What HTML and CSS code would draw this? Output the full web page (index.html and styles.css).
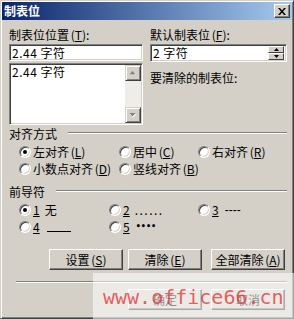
FILE: index.html
```html
<!DOCTYPE html>
<html lang="zh-CN">
<head>
<meta charset="utf-8">
<title>制表位</title>
<link rel="stylesheet" href="styles.css">
</head>
<body>
<div class="dialog">
  <div class="titlebar">
    <span class="title">制表位</span>
    <span class="close"><svg width="8" height="7" viewBox="0 0 8 7"><path d="M0 0h2l2 2.4L6 0h2L5 3.5 8 7H6L4 4.6 2 7H0l3-3.5z" fill="#000"/></svg></span>
  </div>
  <div class="body">
    <div class="top">
      <div class="col-left">
        <div class="label">制表位位置 (<u>T</u>):</div>
        <div class="edit">2.44 字符</div>
        <div class="list">
          <div class="list-items"><div class="item">2.44 字符</div></div>
          <div class="vscroll">
            <span class="sbtn"><svg width="8" height="5" viewBox="0 0 8 5"><path d="M4 1 7 4H1z" fill="#fff"/><path d="M3.5 0 6.5 3.5H.5z" fill="#808080"/></svg></span>
            <span class="track"></span>
            <span class="sbtn"><svg width="8" height="5" viewBox="0 0 8 5"><path d="M1 1h6L4 4.5z" fill="#fff"/><path d="M.5 0h6L3.5 3.5z" fill="#808080"/></svg></span>
          </div>
        </div>
      </div>
      <div class="col-right">
        <div class="label">默认制表位 (<u>F</u>):</div>
        <div class="spin">
          <span class="spin-text">2 字符</span>
          <span class="spin-btns">
            <span class="spbtn"><svg width="5" height="3" viewBox="0 0 5 3"><path d="M2.5 0 5 3H0z" fill="#000"/></svg></span>
            <span class="spbtn"><svg width="5" height="3" viewBox="0 0 5 3"><path d="M0 0h5L2.5 3z" fill="#000"/></svg></span>
          </span>
        </div>
        <div class="label clear-label">要清除的制表位:</div>
      </div>
    </div>

    <div class="section"><span>对齐方式</span><span class="rule"></span></div>
    <div class="radios align">
      <label class="opt"><span class="radio checked"></span>左对齐 (<u>L</u>)</label>
      <label class="opt"><span class="radio"></span>居中 (<u>C</u>)</label>
      <label class="opt"><span class="radio"></span>右对齐 (<u>R</u>)</label>
      <label class="opt"><span class="radio"></span>小数点对齐 (<u>D</u>)</label>
      <label class="opt"><span class="radio"></span>竖线对齐 (<u>B</u>)</label>
    </div>

    <div class="section sec2"><span>前导符</span><span class="rule"></span></div>
    <div class="radios leader">
      <label class="opt"><span class="radio checked"></span><u>1</u><span class="none">无</span></label>
      <label class="opt"><span class="radio"></span><u>2</u><span class="dots">......</span></label>
      <label class="opt"><span class="radio"></span><u>3</u><span class="dash">----</span></label>
      <label class="opt"><span class="radio"></span><u>4</u><span class="under"></span></label>
      <label class="opt"><span class="radio"></span><u>5</u><span class="bdots">••••</span></label>
    </div>

    <div class="btnrow">
      <span class="btn b1">设置 (<u>S</u>)</span>
      <span class="btn b2">清除 (<u>E</u>)</span>
      <span class="btn b3">全部清除 (<u>A</u>)</span>
    </div>
    <div class="sep"></div>
    <div class="okrow">
      <span class="btn">确定</span>
      <span class="btn b3">取消</span>
    </div>
  </div>
  <div class="watermark"><span>www.office66.cn</span></div>
</div>
</body>
</html>
```

FILE: styles.css
```css
* { box-sizing: border-box; }
html, body { margin: 0; padding: 0; }
body {
  width: 294px;
  height: 319px;
  overflow: hidden;
  background: #d4d0c8;
  font-family: "Noto Sans CJK SC", "Noto Sans", sans-serif;
  font-size: 12px;
  color: #000;
}
u { text-decoration: underline; text-underline-offset: 1px; }

.dialog {
  position: relative;
  width: 294px;
  height: 319px;
  background: #d4d0c8;
  border: 1px solid;
  border-color: #d4d0c8 #404040 #404040 #d4d0c8;
  box-shadow: inset 1px 1px #fff, inset -1px -1px #808080;
  padding: 1px;
  display: flex;
  flex-direction: column;
}

.titlebar {
  height: 18px;
  flex: none;
  display: flex;
  align-items: center;
  padding-left: 2px;
  background: linear-gradient(to right, #0a246a, #a6caf0);
}
.title { color: #fff; font-weight: bold; font-size: 12px; line-height: 14px; }
.close {
  margin-left: auto;
  margin-right: 2px;
  width: 16px;
  height: 14px;
  background: #d4d0c8;
  border: 1px solid;
  border-color: #fff #404040 #404040 #fff;
  box-shadow: inset -1px -1px #808080;
  display: flex;
  align-items: center;
  justify-content: center;
  padding-right: 1px;
}

.body { padding: 8px 5px 0 7px; display: flex; flex-direction: column; }

.top { display: flex; }
.col-left { width: 134px; display: flex; flex-direction: column; }
.col-right { width: 137px; margin-left: 7px; display: flex; flex-direction: column; }
.label { height: 14px; line-height: 14px; white-space: nowrap; word-spacing: -1px; }
.clear-label { margin-top: 9px; }

.edit, .list, .spin {
  background: #fff;
  border: 1px solid;
  border-color: #808080 #fff #fff #808080;
  box-shadow: inset 1px 1px #404040, inset -1px -1px #d4d0c8;
}
.edit {
  margin-top: 2px;
  height: 17px;
  line-height: 15px;
  padding-left: 2px;
  white-space: nowrap;
  letter-spacing: 0.5px;
}
.list {
  margin-top: 2px;
  height: 62px;
  display: flex;
  padding: 1px;
}
.list-items { flex: 1; padding-left: 1px; }
.item { line-height: 13px; white-space: nowrap; letter-spacing: 0.5px; }
.vscroll { width: 16px; display: flex; flex-direction: column; }
.sbtn {
  width: 16px;
  height: 16px;
  background: #d4d0c8;
  border: 1px solid;
  border-color: #d4d0c8 #404040 #404040 #d4d0c8;
  box-shadow: inset 1px 1px #fff, inset -1px -1px #808080;
  display: flex;
  align-items: center;
  justify-content: center;
}
.track { flex: 1; background: #eeede9; }

.spin {
  margin-top: 2px;
  height: 18px;
  display: flex;
  align-items: center;
  padding: 2px;
}
.spin-text { flex: 1; line-height: 14px; white-space: nowrap; letter-spacing: 0.5px; }
.spin-btns { width: 16px; height: 14px; display: flex; flex-direction: column; }
.spbtn {
  height: 7px;
  background: #d4d0c8;
  border: 1px solid;
  border-color: #fff #404040 #404040 #fff;
  display: flex;
  align-items: center;
  justify-content: center;
}

.section {
  margin-top: 2px;
  height: 14px;
  line-height: 14px;
  display: flex;
  align-items: center;
  white-space: nowrap;
}
.sec2 { margin-top: 8px; }
.rule {
  flex: 1;
  margin-left: 11px;
  margin-top: -2px;
  height: 2px;
  border-top: 1px solid #808080;
  border-bottom: 1px solid #fff;
}

.radios { display: grid; padding-left: 10px; margin-top: 2px; }
.align { grid-template-columns: 100px 79px auto; }
.leader { grid-template-columns: 90px 89px auto; }
.opt { display: flex; align-items: center; height: 17px; white-space: nowrap; word-spacing: -1px; }
.radio {
  flex: none;
  position: relative;
  width: 12px;
  height: 12px;
  margin-right: 2px;
  border-radius: 50%;
  background: #fff;
  border: 1px solid;
  border-color: #808080 #fff #fff #808080;
  box-shadow: inset 1px 1px #404040, inset -1px -1px #d4d0c8;
}
.radio.checked::after {
  content: "";
  position: absolute;
  left: 3px;
  top: 3px;
  width: 4px;
  height: 4px;
  border-radius: 50%;
  background: #000;
}
.none { margin-left: 5px; }
.dots { letter-spacing: 1.5px; margin-left: 5px; }
.dash { font-family: "Liberation Sans", sans-serif; margin-left: 6px; }
.under { display: inline-block; width: 24px; height: 10px; border-bottom: 1px solid #000; margin-left: 7px; }
.bdots { font-family: "DejaVu Sans", sans-serif; font-size: 8px; font-weight: bold; margin-left: 6px; }

.btnrow { display: flex; margin-top: 14px; padding-left: 40px; }
.btn {
  width: 74px;
  height: 21px;
  background: #d4d0c8;
  border: 1px solid;
  border-color: #fff #404040 #404040 #fff;
  box-shadow: inset -1px -1px #808080;
  display: flex;
  align-items: center;
  justify-content: center;
  white-space: nowrap;
  word-spacing: -1px;
}
.b2 { margin-left: 5px; }
.b3 { margin-left: 9px; }

.sep {
  margin-top: 11px;
  margin-left: 7px;
  height: 2px;
  border-top: 1px solid #808080;
  border-bottom: 1px solid #fff;
}
.okrow { display: flex; margin-top: 6px; padding-left: 119px; }

.watermark {
  position: absolute;
  left: 92px;
  top: 272px;
  right: -1px;
  bottom: -1px;
  background: rgba(255, 255, 255, 0.55);
  padding: 14px 0 0 10px;
}
.watermark span {
  font-family: "DejaVu Sans Mono", monospace;
  font-size: 20px;
  line-height: 20px;
  color: rgba(228, 56, 56, 0.8);
  white-space: nowrap;
}
```
